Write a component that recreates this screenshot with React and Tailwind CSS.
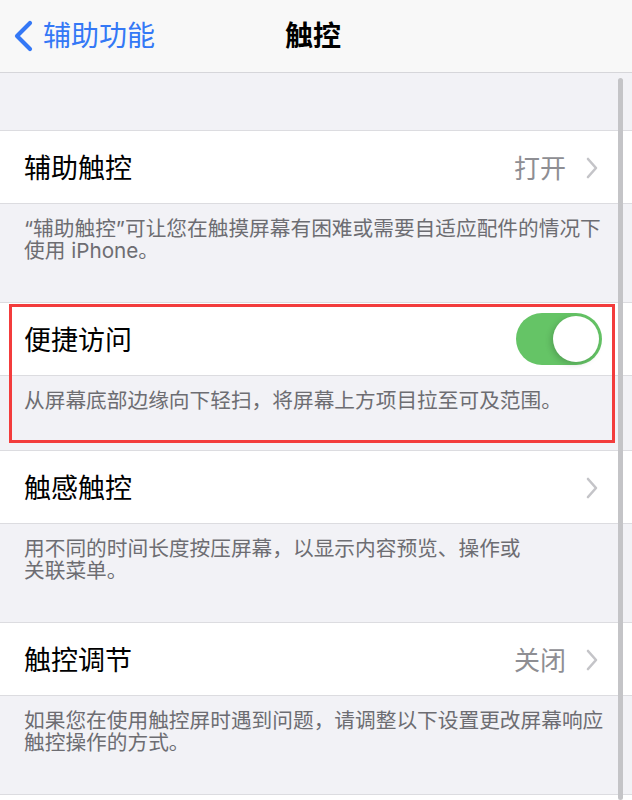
import React from 'react';

const FONT = { fontFamily: 'Inter, "Noto Sans CJK SC", sans-serif' };

function Chevron() {
  return (
    <svg width="12" height="22" viewBox="0 0 12 22" fill="none">
      <polyline points="2,2 10,11 2,20" stroke="#c4c4c8" strokeWidth="2.6" strokeLinecap="round" strokeLinejoin="round" />
    </svg>
  );
}

function Toggle() {
  return (
    <div className="w-[86px] h-[52px] rounded-full bg-[#65c466] flex items-center justify-end p-[3px]">
      <div className="w-[46px] h-[46px] rounded-full bg-white shadow-[-2px_2px_6px_rgba(0,0,0,0.18)]" />
    </div>
  );
}

function Row({ title, value, toggle }) {
  return (
    <div className="h-[74px] bg-white border-y border-[#dcdce0] flex items-center pl-[24px] pr-[30px]">
      <span className="text-[27px] text-black flex-1 mt-[5px]">{title}</span>
      {toggle ? (
        <Toggle />
      ) : (
        <div className="flex items-center gap-[20px] pr-[4px] mt-[2px]">
          {value && <span className="text-[26px] text-[#8e8e93]">{value}</span>}
          <Chevron />
        </div>
      )}
    </div>
  );
}

function Footer({ children, height }) {
  return (
    <div className={`${height} px-[24px] pt-[14px] text-[20.7px] leading-[22px] text-[#6d6d72] whitespace-nowrap`}>
      {children}
    </div>
  );
}

export default function App() {
  return (
    <div className="relative w-[632px] h-[800px] overflow-hidden bg-[#f2f2f6]" style={FONT}>
      {/* nav bar */}
      <div className="h-[73px] bg-[#f8f8f8] border-b border-[#d6d6da] grid grid-cols-[1fr_auto_1fr] items-center">
        <div className="flex items-center pl-[13px] gap-[9px] text-[#3478f6]">
          <svg width="21" height="32" viewBox="0 0 21 32" fill="none">
            <polyline points="17,3 4,16 17,29" stroke="#3478f6" strokeWidth="4.2" strokeLinecap="round" strokeLinejoin="round" />
          </svg>
          <span className="text-[28px]">辅助功能</span>
        </div>
        <div className="text-[28px] font-semibold text-black pr-[6px]">触控</div>
        <div />
      </div>

      <div className="h-[57px]" />

      <Row title="辅助触控" value="打开" />
      <Footer height="h-[98px]">
        “辅助触控”可让您在触摸屏幕有困难或需要自适应配件的情况下
        <br />
        使用 iPhone。
      </Footer>

      <Row title="便捷访问" toggle />
      <Footer height="h-[74px]">从屏幕底部边缘向下轻扫，将屏幕上方项目拉至可及范围。</Footer>

      <Row title="触感触控" />
      <Footer height="h-[98px]">
        用不同的时间长度按压屏幕，以显示内容预览、操作或
        <br />
        关联菜单。
      </Footer>

      <Row title="触控调节" value="关闭" />
      <Footer height="h-[98px]">
        如果您在使用触控屏时遇到问题，请调整以下设置更改屏幕响应
        <br />
        触控操作的方式。
      </Footer>

      <div className="h-[80px] bg-white border-t border-[#dcdce0]" />

      {/* scroll indicator */}
      <div className="absolute right-[9px] top-[78px] bottom-0 w-[5px] rounded-full bg-[#c4c4c7]" />

      {/* highlight frame */}
      <div className="absolute left-[9px] top-[304px] w-[606px] h-[139px] border-[3px] border-[#f33c3c]" />
    </div>
  );
}
